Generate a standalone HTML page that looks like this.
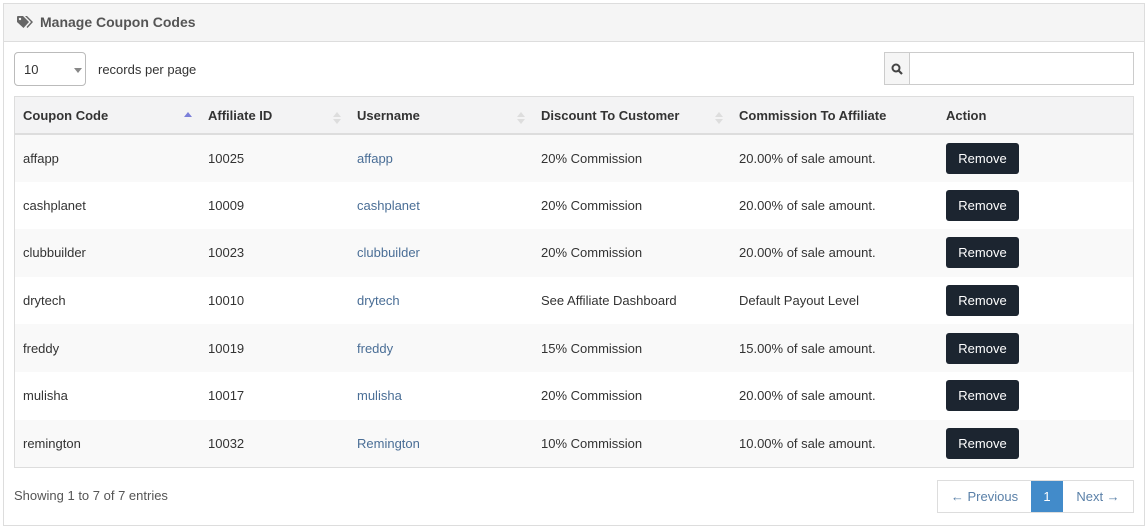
<!DOCTYPE html>
<html><head><style>
body{margin:0;width:1148px;height:528px;background:#fff;font-family:"Liberation Sans",sans-serif;font-size:13px;color:#333;position:relative;overflow:hidden}
.panel{position:absolute;left:3px;top:3px;width:1140px;height:521px;border:1px solid #ddd}
.hd{height:37px;background:#f5f5f5;border-bottom:1px solid #ddd;position:relative}
.hd span{position:absolute;left:36px;top:10px;font-weight:bold;font-size:14px;color:#555}
.sel{position:absolute;left:14px;top:52px;width:72px;height:34px;border:1px solid #bbb;border-radius:4px;box-sizing:border-box}
.sel span{position:absolute;left:9px;top:9px}
.sel i{position:absolute;left:59px;top:15px;border:4px solid transparent;border-top:5px solid #888}
.rpp{position:absolute;left:98px;top:62px}
.sb{position:absolute;left:884px;top:52px;width:26px;height:33px;border:1px solid #ccc;background:#f5f5f5;box-sizing:border-box}
.si{position:absolute;left:909px;top:52px;width:225px;height:33px;border:1px solid #ccc;box-sizing:border-box}
table{position:absolute;left:14px;top:96px;width:1120px;border-collapse:collapse;border:1px solid #ddd}
th{height:36px;text-align:left;background:#f3f3f4;border-bottom:2px solid #ddd;padding:0 8px;font-weight:bold;position:relative}
td{height:47.6px;padding:0 8px;box-sizing:border-box}
tr.o td{background:#f9f9f9}
a{color:#4a6e96;text-decoration:none}
.b{display:inline-block;background:#1c2530;color:#fff;border-radius:3px;width:73px;height:31px;line-height:31px;text-align:center}
.s{position:absolute;right:8px;top:11px;width:0;height:0;border:4px solid transparent;border-bottom:5px solid #ddd}
.s:after{content:"";position:absolute;left:-4px;top:7px;border:4px solid transparent;border-top:5px solid #ddd}
.up{border-bottom-color:#7b7fd9}.up:after{display:none}
.show{position:absolute;left:14px;top:488px;color:#555}
.pg{position:absolute;left:937px;top:480px;width:197px;height:33px;display:flex;border:1px solid #ddd;box-sizing:border-box}
.pg div{line-height:31px;text-align:center;color:#5a80a8}
.pg .a{background:#428bca;color:#fff}
</style></head><body>
<div class="panel"><div class="hd">
<svg style="position:absolute;left:13px;top:12px" width="17" height="13" viewBox="0 0 17 13"><path d="M0 1 Q0 0 1 0 H6 L12 6 L6.5 12 L0 6Z" fill="#666"/><circle cx="3" cy="3" r="1.2" fill="#f5f5f5"/><path d="M8 0 H10 L16 6 L10.5 12 L9.5 11 L14 6Z" fill="#666"/></svg>
<span>Manage Coupon Codes</span></div></div>
<div class="sel"><span>10</span><i></i></div>
<div class="rpp">records per page</div>
<div class="sb"><svg style="position:absolute;left:6px;top:10px" width="12" height="12" viewBox="0 0 12 12"><circle cx="5" cy="5" r="3.5" fill="none" stroke="#444" stroke-width="2"/><path d="M7.5 7.5 L11 11" stroke="#444" stroke-width="2.2"/></svg></div>
<div class="si"></div>
<table>
<tr><th style="width:169px">Coupon Code<i class="s up"></i></th><th style="width:133px">Affiliate ID<i class="s"></i></th><th style="width:168px">Username<i class="s"></i></th><th style="width:182px">Discount To Customer<i class="s"></i></th><th style="width:191px">Commission To Affiliate</th><th>Action</th></tr>
<tr class="o"><td>affapp</td><td>10025</td><td><a>affapp</a></td><td>20% Commission</td><td>20.00% of sale amount.</td><td><span class="b">Remove</span></td></tr>
<tr><td>cashplanet</td><td>10009</td><td><a>cashplanet</a></td><td>20% Commission</td><td>20.00% of sale amount.</td><td><span class="b">Remove</span></td></tr>
<tr class="o"><td>clubbuilder</td><td>10023</td><td><a>clubbuilder</a></td><td>20% Commission</td><td>20.00% of sale amount.</td><td><span class="b">Remove</span></td></tr>
<tr><td>drytech</td><td>10010</td><td><a>drytech</a></td><td>See Affiliate Dashboard</td><td>Default Payout Level</td><td><span class="b">Remove</span></td></tr>
<tr class="o"><td>freddy</td><td>10019</td><td><a>freddy</a></td><td>15% Commission</td><td>15.00% of sale amount.</td><td><span class="b">Remove</span></td></tr>
<tr><td>mulisha</td><td>10017</td><td><a>mulisha</a></td><td>20% Commission</td><td>20.00% of sale amount.</td><td><span class="b">Remove</span></td></tr>
<tr class="o"><td>remington</td><td>10032</td><td><a>Remington</a></td><td>10% Commission</td><td>10.00% of sale amount.</td><td><span class="b">Remove</span></td></tr>
</table>
<div class="show">Showing 1 to 7 of 7 entries</div>
<div class="pg"><div style="width:93px">← Previous</div><div class="a" style="width:32px">1</div><div style="flex:1">Next →</div></div>
</body></html>
